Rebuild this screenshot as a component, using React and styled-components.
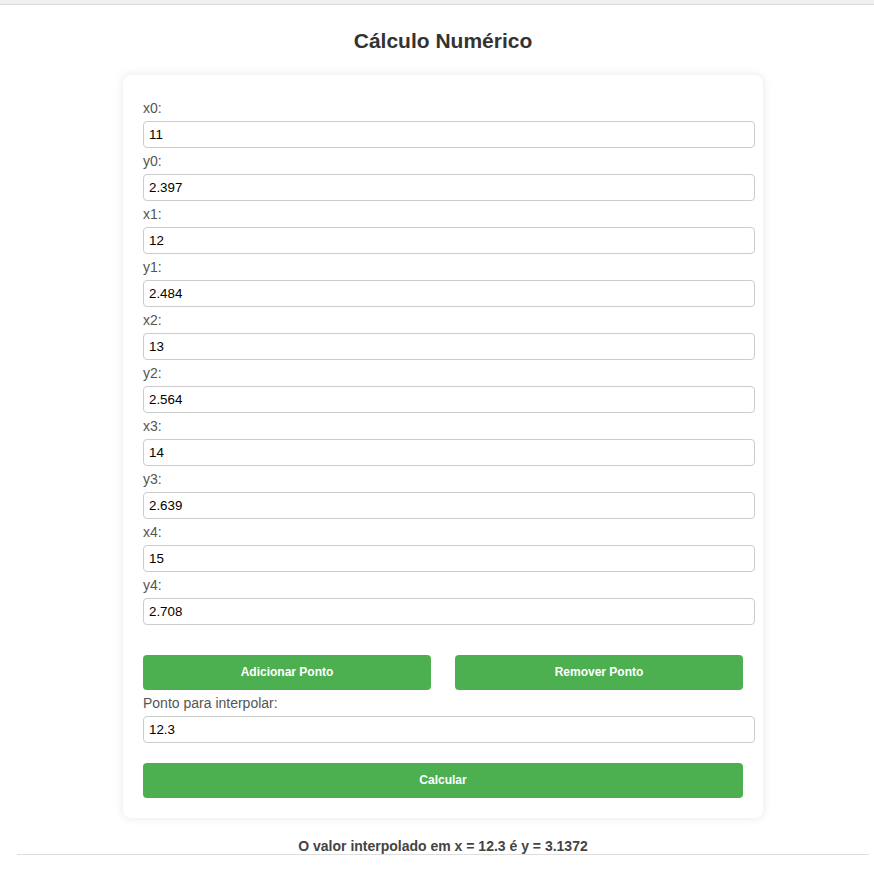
import React, { useState } from 'react'
import styled, { createGlobalStyle } from 'styled-components'

const GlobalStyle = createGlobalStyle`
  body {
    margin: 0;
    background: #fff;
    font-family: "Liberation Sans", Arial, sans-serif;
  }
`

const TopStrip = styled.div`
  height: 4px;
  background: #f0f0f0;
  border-bottom: 1px solid #dcdcdc;
`

const Main = styled.main`
  margin: 0 5px 0 17px;
  display: flex;
  flex-direction: column;
  align-items: center;
  border-bottom: 1px solid #dedede;
`

const Title = styled.h2`
  margin: 24px 0 22px;
  font-size: 21px;
  line-height: 24px;
  font-weight: bold;
  color: #333;
`

const Card = styled.div`
  width: 600px;
  padding: 20px;
  background: #fff;
  border-radius: 8px;
  box-shadow: 0 0 10px rgba(0, 0, 0, 0.1);
`

const Label = styled.label`
  display: block;
  margin: 5px 0;
  font-size: 14px;
  line-height: 16px;
  color: #555;
`

const Input = styled.input`
  display: block;
  width: 100%;
  margin: 0;
  padding: 5px;
  font-family: "Liberation Sans", Arial, sans-serif;
  font-size: 13.333px;
  line-height: 15px;
  color: #000;
  border: 1px solid #ccc;
  border-radius: 4px;
  outline: none;
`

const ButtonRow = styled.div`
  display: flex;
  justify-content: space-between;
  margin-top: ${p => p.$top || 0}px;
`

const Button = styled.button`
  width: ${p => p.$width};
  padding: 10px;
  border: none;
  border-radius: 4px;
  background: #4caf50;
  color: #fff;
  font-family: "Liberation Sans", Arial, sans-serif;
  font-size: 12px;
  font-weight: bold;
  line-height: 15px;
  cursor: pointer;
`

const Result = styled.p`
  margin: 20px 0 0;
  font-size: 14px;
  line-height: 16px;
  font-weight: bold;
  color: #444;
`

const initialPoints = [
  ['11', '2.397'],
  ['12', '2.484'],
  ['13', '2.564'],
  ['14', '2.639'],
  ['15', '2.708'],
]

const App = () => {
  const [points] = useState(initialPoints)
  const [target, setTarget] = useState('12.3')

  return (
    <>
      <GlobalStyle />
      <TopStrip />
      <Main>
        <Title>Cálculo Numérico</Title>
        <Card>
          {points.map(([x, y], i) => (
            <React.Fragment key={i}>
              <Label>x{i}:</Label>
              <Input defaultValue={x} />
              <Label>y{i}:</Label>
              <Input defaultValue={y} />
            </React.Fragment>
          ))}
          <ButtonRow $top={30}>
            <Button $width="48%">Adicionar Ponto</Button>
            <Button $width="48%">Remover Ponto</Button>
          </ButtonRow>
          <Label>Ponto para interpolar:</Label>
          <Input value={target} onChange={e => setTarget(e.target.value)} />
          <ButtonRow $top={20}>
            <Button $width="100%">Calcular</Button>
          </ButtonRow>
        </Card>
        <Result>O valor interpolado em x = 12.3 é y = 3.1372</Result>
      </Main>
    </>
  )
}

export default App
